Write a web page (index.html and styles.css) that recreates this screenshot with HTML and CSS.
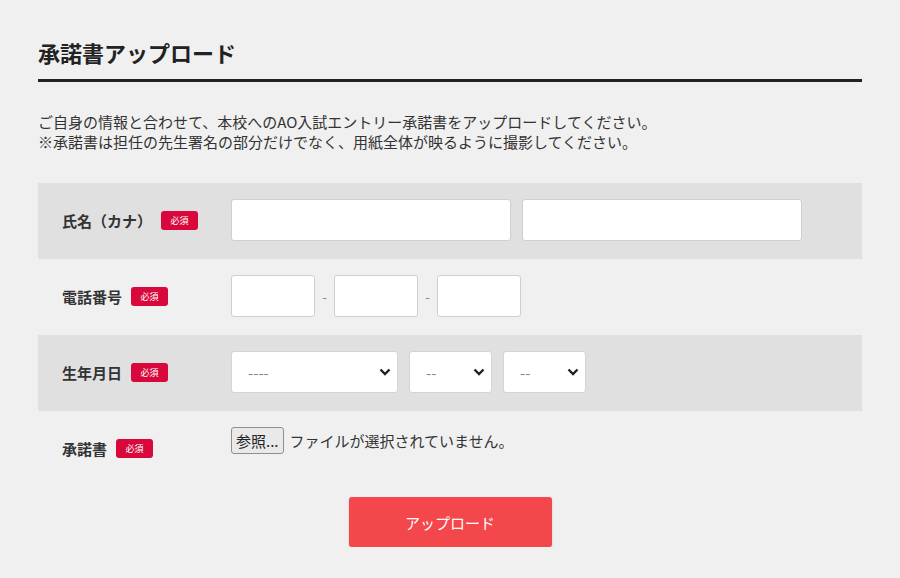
FILE: index.html
```html
<!DOCTYPE html>
<html lang="ja">

<head>
    <meta charset="UTF-8">
    <meta name="viewport" content="width=device-width, initial-scale=1.0">
    <title>承諾書アップロード</title>
    <link rel="stylesheet" href="styles.css">
</head>

<body>
    <div class="page">
        <h1 class="title">承諾書アップロード</h1>

        <p class="lead">
            ご自身の情報と合わせて、本校へのAO入試エントリー承諾書をアップロードしてください。<br>
            ※承諾書は担任の先生署名の部分だけでなく、用紙全体が映るように撮影してください。
        </p>

        <form class="form">
            <!-- 氏名 -->
            <div class="row gray">
                <div class="label">氏名（カナ）<span class="req">必須</span></div>
                <div class="field">
                    <input type="text" class="input name">
                    <input type="text" class="input name">
                </div>
            </div>

            <!-- 電話番号 -->
            <div class="row">
                <div class="label">電話番号<span class="req">必須</span></div>
                <div class="field">
                    <input type="text" class="input tel">
                    <span class="dash">-</span>
                    <input type="text" class="input tel">
                    <span class="dash">-</span>
                    <input type="text" class="input tel">
                </div>
            </div>

            <!-- 生年月日 -->
            <div class="row gray">
                <div class="label">生年月日<span class="req">必須</span></div>
                <div class="field selects">
                    <div class="select year">
                        <select><option>----</option></select>
                        <svg class="arrow" viewBox="0 0 12 8"><path d="M1.5 1.5 6 6 10.5 1.5" /></svg>
                    </div>
                    <div class="select small">
                        <select><option>--</option></select>
                        <svg class="arrow" viewBox="0 0 12 8"><path d="M1.5 1.5 6 6 10.5 1.5" /></svg>
                    </div>
                    <div class="select small">
                        <select><option>--</option></select>
                        <svg class="arrow" viewBox="0 0 12 8"><path d="M1.5 1.5 6 6 10.5 1.5" /></svg>
                    </div>
                </div>
            </div>

            <!-- 承諾書 -->
            <div class="row">
                <div class="label">承諾書<span class="req">必須</span></div>
                <div class="field file">
                    <label class="file-btn">参照...<input type="file"></label>
                    <span class="file-name">ファイルが選択されていません。</span>
                </div>
            </div>

            <div class="submit-wrap">
                <button type="button" class="submit">アップロード</button>
            </div>
        </form>
    </div>
</body>

</html>
```

FILE: styles.css
```css
body {
    margin: 0;
    background-color: #f0f0f0;
    color: #333;
    font-family: "Noto Sans CJK JP", "Noto Sans", sans-serif;
}

.page {
    padding: 37px 38px 0;
}

.title {
    margin: 0;
    font-size: 22px;
    line-height: 30px;
    font-weight: bold;
    color: #222;
    padding-bottom: 12px;
    border-bottom: 3px solid #222;
}

.lead {
    margin: 30px 0 31px;
    font-size: 15px;
    line-height: 20px;
}

.row {
    display: flex;
    align-items: center;
    height: 76px;
    box-sizing: border-box;
    padding: 16px 0 18px;
}

.row.gray {
    background-color: #e0e0e0;
}

.label {
    width: 193px;
    box-sizing: border-box;
    padding-left: 24px;
    font-size: 15px;
    font-weight: bold;
    color: #333;
    display: flex;
    align-items: center;
}

.req {
    display: inline-block;
    margin-left: 9px;
    width: 37px;
    height: 19px;
    line-height: 19px;
    border-radius: 3px;
    background-color: #d8073c;
    color: #fff;
    font-size: 9px;
    font-weight: normal;
    text-align: center;
}

.field {
    display: flex;
    align-items: center;
    height: 42px;
}

.input {
    height: 42px;
    box-sizing: border-box;
    border: 1px solid #cfcfcf;
    border-radius: 3px;
    background-color: #fff;
    padding: 0 12px;
    font-size: 14px;
    margin: 0;
}

.input.name {
    width: 280px;
    margin-right: 11px;
}

.input.tel {
    width: 84px;
}

.dash {
    width: 19px;
    text-align: center;
    color: #888;
    font-size: 13px;
}

.selects {
    gap: 11px;
}

.select {
    position: relative;
    height: 42px;
}

.select select {
    appearance: none;
    -webkit-appearance: none;
    width: 100%;
    height: 42px;
    box-sizing: border-box;
    border: 1px solid #d4d4d4;
    border-radius: 3px;
    background-color: #fff;
    padding: 0 16px;
    font-family: "Noto Sans CJK JP", sans-serif;
    font-size: 15px;
    color: #888;
}

.select.year {
    width: 167px;
}

.select.small {
    width: 83px;
}

.arrow {
    position: absolute;
    right: 7px;
    top: 17px;
    width: 12px;
    height: 8px;
    pointer-events: none;
}

.arrow path {
    fill: none;
    stroke: #222;
    stroke-width: 2.4;
}

.field.file {
    align-self: flex-start;
    align-items: flex-start;
}

.file-btn {
    display: inline-block;
    height: 27px;
    line-height: 25px;
    box-sizing: border-box;
    padding: 0 4px;
    border: 1px solid #8f8f8f;
    border-radius: 3px;
    background-color: #e9e9e9;
    font-size: 15px;
    color: #222;
}

.file-btn input {
    display: none;
}

.file-name {
    margin-left: 6px;
    font-size: 15px;
    line-height: 27px;
    color: #333;
}

.submit-wrap {
    display: flex;
    justify-content: center;
    margin-top: 10px;
}

.submit {
    width: 203px;
    height: 50px;
    border: none;
    border-radius: 3px;
    background-color: #f4474c;
    box-shadow: 0 1px 2px rgba(0, 0, 0, 0.2);
    color: #fff;
    font-family: "Noto Sans CJK JP", sans-serif;
    font-size: 15px;
}
```
